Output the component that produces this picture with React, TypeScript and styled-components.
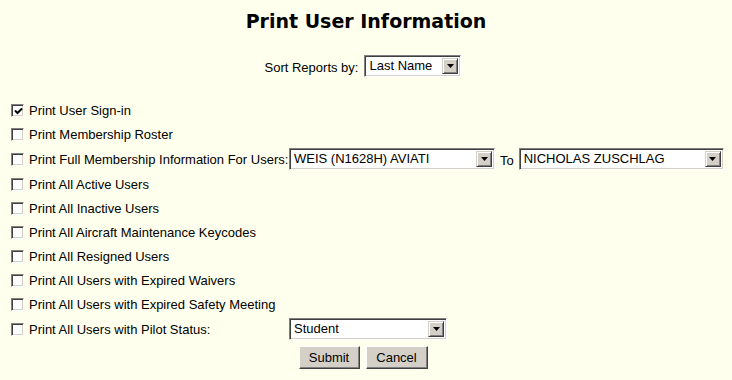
import React from 'react';
import styled, { createGlobalStyle } from 'styled-components';

const GlobalStyle = createGlobalStyle`
  html, body {
    margin: 0;
    padding: 0;
    background: #ffffee;
  }
  body {
    font-family: 'Liberation Sans', Arial, sans-serif;
    font-size: 13px;
    color: #000;
  }
`;

const Page = styled.div`
  width: 732px;
  height: 380px;
  overflow: hidden;
  background: #ffffee;
`;

const Title = styled.h1`
  margin: 10px 0 0 0;
  font-family: 'DejaVu Sans', Verdana, sans-serif;
  font-weight: bold;
  font-size: 19px;
  line-height: 22px;
  text-align: center;
`;

const SortRow = styled.div`
  display: flex;
  justify-content: center;
  align-items: center;
  gap: 6px;
  margin-top: 23px;
  padding-right: 6px;
`;

const SortLabel = styled.span`
  padding-top: 2px;
`;

const OptionList = styled.div`
  margin-top: 21px;
  padding-left: 10px;
  display: flex;
  flex-direction: column;
`;

const Row = styled.div<{ $tall?: boolean }>`
  display: grid;
  grid-template-columns: 279px auto;
  align-items: center;
  height: ${({ $tall }) => ($tall ? '26px' : '24px')};
`;

const LabelCell = styled.label`
  display: flex;
  align-items: center;
  gap: 5px;
  white-space: nowrap;
`;

const FieldCell = styled.div`
  display: flex;
  align-items: center;
  gap: 4px;
`;

const Box = styled.span`
  display: inline-block;
  box-sizing: border-box;
  width: 13px;
  height: 13px;
  margin-left: 1px;
  background: #fff;
  border: 1px solid;
  border-color: #808080 #ffffff #ffffff #808080;
  box-shadow: inset 1px 1px 0 #404040, inset -1px -1px 0 #d4d0c8;
  position: relative;
`;

const Tick = styled.svg`
  position: absolute;
  left: 2px;
  top: 2px;
`;

const Select = styled.div<{ $width: number }>`
  box-sizing: border-box;
  width: ${({ $width }) => $width}px;
  height: 22px;
  display: flex;
  align-items: stretch;
  background: #fff;
  border: 1px solid;
  border-color: #808080 #ffffff #ffffff #808080;
  box-shadow: inset 1px 1px 0 #404040, inset -1px -1px 0 #d4d0c8;
  padding: 2px;
`;

const SelectValue = styled.span`
  flex: 1;
  padding-left: 2px;
  line-height: 16px;
  font-size: 13px;
  white-space: nowrap;
  overflow: hidden;
`;

const ArrowButton = styled.span`
  box-sizing: border-box;
  width: 16px;
  background: #d4d0c8;
  border: 1px solid;
  border-color: #d4d0c8 #404040 #404040 #d4d0c8;
  box-shadow: inset 1px 1px 0 #ffffff, inset -1px -1px 0 #808080;
  display: flex;
  align-items: center;
  justify-content: center;
`;

const ToLabel = styled.span`
  padding: 2px 1px 0 1px;
`;

const Actions = styled.div`
  display: flex;
  justify-content: center;
  gap: 6px;
  margin-top: 4px;
  padding-right: 6px;
`;

const Button = styled.button<{ $width: number }>`
  box-sizing: border-box;
  width: ${({ $width }) => $width}px;
  height: 23px;
  padding: 0;
  font-family: 'Liberation Sans', Arial, sans-serif;
  font-size: 13px;
  color: #000;
  background: #d4d0c8;
  border: 1px solid;
  border-color: #ffffff #404040 #404040 #ffffff;
  box-shadow: inset -1px -1px 0 #808080;
  border-radius: 0;
`;

const Checkbox = ({ checked }: { checked?: boolean }) => (
  <Box>
    {checked && (
      <Tick width="9" height="9" viewBox="0 0 9 9">
        <path d="M1 3.5 L3.5 6 L8 1.5" stroke="#000" strokeWidth="2" fill="none" />
      </Tick>
    )}
  </Box>
);

const FakeSelect = ({ value, width }: { value: string; width: number }) => (
  <Select $width={width}>
    <SelectValue>{value}</SelectValue>
    <ArrowButton>
      <svg width="7" height="4" viewBox="0 0 7 4">
        <path d="M0 0 H7 L3.5 4 Z" fill="#000" />
      </svg>
    </ArrowButton>
  </Select>
);

const options = [
  { label: 'Print User Sign-in', checked: true },
  { label: 'Print Membership Roster' },
  { label: 'Print Full Membership Information For Users:', range: true },
  { label: 'Print All Active Users' },
  { label: 'Print All Inactive Users' },
  { label: 'Print All Aircraft Maintenance Keycodes' },
  { label: 'Print All Resigned Users' },
  { label: 'Print All Users with Expired Waivers' },
  { label: 'Print All Users with Expired Safety Meeting' },
  { label: 'Print All Users with Pilot Status:', status: true },
];

export default function App() {
  return (
    <Page>
      <GlobalStyle />
      <Title>Print User Information</Title>
      <SortRow>
        <SortLabel>Sort Reports by:</SortLabel>
        <FakeSelect value="Last Name" width={97} />
      </SortRow>
      <OptionList>
        {options.map((o) => (
          <Row key={o.label} $tall={o.range || o.status}>
            <LabelCell>
              <Checkbox checked={o.checked} />
              {o.label}
            </LabelCell>
            {o.range && (
              <FieldCell>
                <FakeSelect value="WEIS (N1628H) AVIATI" width={206} />
                <ToLabel>To</ToLabel>
                <FakeSelect value="NICHOLAS ZUSCHLAG" width={205} />
              </FieldCell>
            )}
            {o.status && (
              <FieldCell>
                <FakeSelect value="Student" width={158} />
              </FieldCell>
            )}
          </Row>
        ))}
      </OptionList>
      <Actions>
        <Button $width={61}>Submit</Button>
        <Button $width={62}>Cancel</Button>
      </Actions>
    </Page>
  );
}
